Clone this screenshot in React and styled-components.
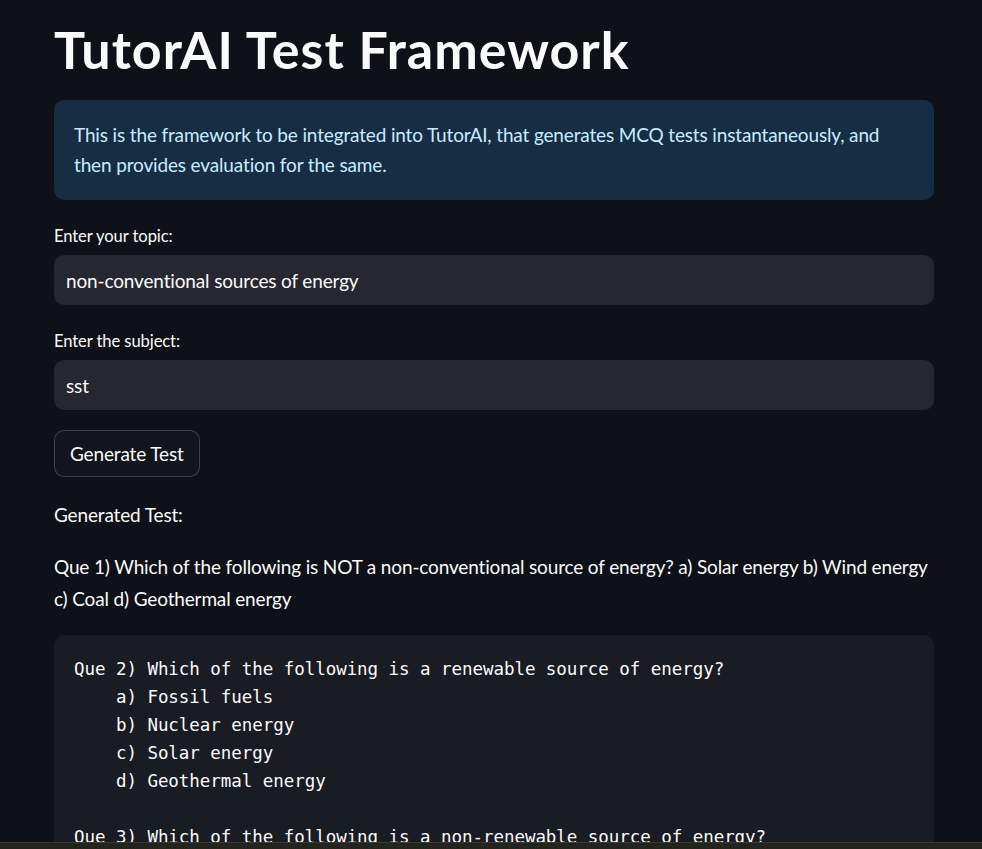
import React from 'react';
import styled, { createGlobalStyle } from 'styled-components';

const GlobalStyle = createGlobalStyle`
  html, body {
    margin: 0;
    padding: 0;
    background-color: #0e1117;
    color: #fafafa;
    font-family: Lato, "Noto Sans", sans-serif;
  }
`;

const Main = styled.main`
  width: 880px;
  padding: 18px 48px 0 54px;
  display: flex;
  flex-direction: column;
  gap: 20px;
`;

const Title = styled.h1`
  margin: 0;
  font-size: 52px;
  line-height: 62px;
  font-weight: 700;
  letter-spacing: 1px;
  color: #fafafa;
`;

const InfoBox = styled.div`
  background-color: #172d43;
  color: #c7ebff;
  border-radius: 10px;
  padding: 20px;
  font-size: 19px;
  letter-spacing: -0.15px;
  line-height: 30px;
`;

const Field = styled.div`
  display: flex;
  flex-direction: column;
`;

const Label = styled.label`
  font-size: 16.6px;
  letter-spacing: -0.1px;
  line-height: 24px;
  margin: 4px 0 7px;
`;

const Input = styled.input`
  box-sizing: border-box;
  width: 100%;
  height: 50px;
  border: none;
  outline: none;
  border-radius: 10px;
  background-color: #262730;
  color: #fafafa;
  font-family: inherit;
  font-size: 19px;
  letter-spacing: -0.15px;
  padding: 0 12px;
`;

const ButtonRow = styled.div`
  height: 49px;
`;

const Button = styled.button`
  height: 47px;
  padding: 0 15px;
  border-radius: 10px;
  border: 1px solid rgba(250, 250, 250, 0.2);
  background-color: #12151c;
  color: #fafafa;
  font-family: inherit;
  font-size: 19px;
  letter-spacing: -0.15px;
  cursor: pointer;
`;

const Text = styled.p`
  margin: 0;
  font-size: 19px;
  letter-spacing: -0.15px;
  line-height: 32px;
`;

const CodeBlock = styled.pre`
  margin: 0;
  background-color: #1a1c24;
  border-radius: 10px;
  padding: 20px;
  font-family: "DejaVu Sans Mono", "Liberation Mono", monospace;
  font-size: 17.5px;
  letter-spacing: -0.05px;
  line-height: 28px;
  color: #fafafa;
  white-space: pre;
  overflow: hidden;
`;

const BottomBar = styled.div`
  position: fixed;
  left: 0;
  right: 0;
  bottom: 0;
  height: 6px;
  background-color: #23241d;
  border-top: 1px solid #3a3a2f;
`;

const code = `Que 2) Which of the following is a renewable source of energy?
    a) Fossil fuels
    b) Nuclear energy
    c) Solar energy
    d) Geothermal energy

Que 3) Which of the following is a non-renewable source of energy?
    a) Solar energy
    b) Wind energy
    c) Natural gas
    d) Tidal energy`;

const App = () => (
  <>
    <GlobalStyle />
    <Main>
      <Title>TutorAI Test Framework</Title>
      <InfoBox>
        This is the framework to be integrated into TutorAI, that generates MCQ tests instantaneously, and
        then provides evaluation for the same.
      </InfoBox>
      <Field>
        <Label>Enter your topic:</Label>
        <Input defaultValue="non-conventional sources of energy" />
      </Field>
      <Field>
        <Label>Enter the subject:</Label>
        <Input defaultValue="sst" />
      </Field>
      <ButtonRow>
        <Button>Generate Test</Button>
      </ButtonRow>
      <Text>Generated Test:</Text>
      <Text>
        Que 1) Which of the following is NOT a non-conventional source of energy? a) Solar energy b) Wind energy
        c) Coal d) Geothermal energy
      </Text>
      <CodeBlock>{code}</CodeBlock>
    </Main>
    <BottomBar />
  </>
);

export default App;
